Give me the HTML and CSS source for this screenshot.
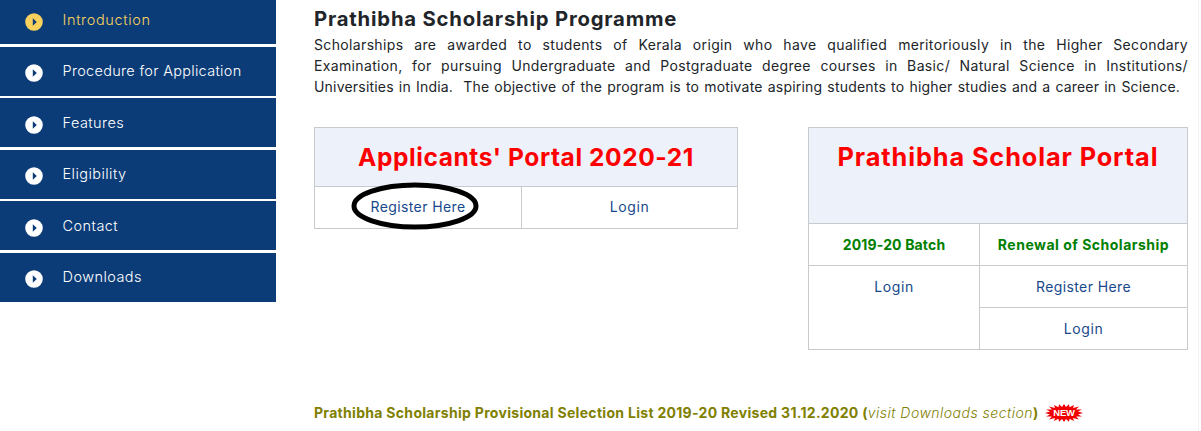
FILE: index.html
```html
<!DOCTYPE html>
<html lang="en">
<head>
    <meta charset="UTF-8">
    <meta name="viewport" content="width=device-width, initial-scale=1.0">
    <title>Prathibha Scholarship Programme</title>
    <link rel="stylesheet" href="styles.css">
</head>
<body>

    <svg class="defs" width="0" height="0">
        <symbol id="arrow" viewBox="0 0 18 18">
            <path fill="currentColor" fill-rule="evenodd" d="M9 0.2a8.8 8.8 0 1 0 0 17.6a8.8 8.8 0 0 0 0-17.6zM7.8 5.3L11.8 9l-4 3.7z"/>
        </symbol>
    </svg>

    <div class="page">
        <nav class="sidebar">
            <a class="active"><svg class="icon"><use href="#arrow"/></svg><span>Introduction</span></a>
            <a><svg class="icon"><use href="#arrow"/></svg><span class="procedure">Procedure for Application</span></a>
            <a><svg class="icon"><use href="#arrow"/></svg><span>Features</span></a>
            <a><svg class="icon"><use href="#arrow"/></svg><span>Eligibility</span></a>
            <a><svg class="icon"><use href="#arrow"/></svg><span>Contact</span></a>
            <a><svg class="icon"><use href="#arrow"/></svg><span>Downloads</span></a>
        </nav>

        <main class="content">
            <h1>Prathibha Scholarship Programme</h1>
            <p class="intro">
                <span>Scholarships are awarded to students of Kerala origin who have qualified meritoriously in the Higher Secondary</span>
                <span>Examination, for pursuing Undergraduate and Postgraduate degree courses in Basic/ Natural Science in Institutions/</span>
                <span class="last">Universities in India.&nbsp; The objective of the program is to motivate aspiring students to higher studies and a career in Science.</span>
            </p>

            <div class="portals">
                <table class="applicants">
                    <colgroup><col class="col-register"><col></colgroup>
                    <tr>
                        <th colspan="2"><h2>Applicants' Portal 2020-21</h2></th>
                    </tr>
                    <tr>
                        <td>
                            <a class="marked register">Register Here
                                <svg class="ring" width="128" height="48" viewBox="0 0 128 48"><ellipse cx="64" cy="24" rx="61" ry="21"/></svg>
                            </a>
                        </td>
                        <td><a class="login">Login</a></td>
                    </tr>
                </table>

                <table class="scholars">
                    <colgroup><col class="col-batch"><col></colgroup>
                    <tr>
                        <th colspan="2"><h2>Prathibha Scholar Portal</h2></th>
                    </tr>
                    <tr class="heads">
                        <td class="batch">2019-20 Batch</td>
                        <td class="renewal">Renewal of Scholarship</td>
                    </tr>
                    <tr>
                        <td rowspan="2"><a class="login">Login</a></td>
                        <td><a class="register">Register Here</a></td>
                    </tr>
                    <tr>
                        <td><a class="login">Login</a></td>
                    </tr>
                </table>
            </div>

            <p class="notice">
                <span><b>Prathibha Scholarship Provisional Selection List 2019-20 Revised 31.12.2020 (</b><i>visit Downloads section</i><b>)</b></span>
                <svg class="new" width="38" height="18" viewBox="0 0 38 18">
                    <polygon points="0,9 5,7.5 1,5.5 7,5.5 4,2.5 10,4 9,1 13.5,3.2 14,0.3 17,3 19,0 21,3 24,0.3 24.5,3.2 29,1 28,4 34,2.5 31,5.5 37,5.5 33,7.5 38,9 33,10.5 37,12.5 31,12.5 34,15.5 28,14 29,17 24.5,14.8 24,17.7 21,15 19,18 17,15 14,17.7 13.5,14.8 9,17 10,14 4,15.5 7,12.5 1,12.5 5,10.5"/>
                    <text x="19" y="12.3">NEW</text>
                </svg>
            </p>
        </main>
    </div>

</body>
</html>
```

FILE: styles.css
```css
* {
    box-sizing: border-box;
}
body {
    margin: 0;
    height: 431px;
    overflow: hidden;
    background: white;
    color: #212529;
    font-family: Inter, "Open Sans", sans-serif;
    font-size: 14px;
    line-height: 21px;
}
.defs {
    display: none;
}
.page {
    display: flex;
    width: 1199px;
    height: 431px;
    border-right: 1px solid #f3f3f3;
}
.sidebar {
    display: flex;
    flex-direction: column;
    gap: 2.5px;
    width: 276px;
    margin-top: -4.9px;
}
.sidebar a {
    display: flex;
    align-items: center;
    flex: none;
    height: 49px;
    padding-left: 25px;
    background: #0b3c78;
    color: white;
    font-size: 14.5px;
    font-weight: 300;
    letter-spacing: 0.45px;
}
.sidebar a.active {
    color: #f8d25c;
    letter-spacing: 0.65px;
}
.sidebar span {
    margin: 0 0 0.4px 19.5px;
}
.sidebar .procedure {
    letter-spacing: 0.3px;
}
.icon {
    width: 18px;
    height: 18px;
    margin-top: 4px;
}
.content {
    width: 874px;
    margin-left: 38px;
    padding-top: 8px;
}
h1 {
    margin: 0;
    font-size: 20.3px;
    line-height: 22px;
    font-weight: 700;
    letter-spacing: 0.8px;
    white-space: nowrap;
}
.intro {
    margin: 4px 0 30px;
}
.intro span {
    display: block;
    text-align-last: justify;
    white-space: nowrap;
    letter-spacing: 0.35px;
}
.intro .last {
    width: 866px;
    letter-spacing: 0.2px;
}
.portals {
    display: flex;
    justify-content: space-between;
    align-items: flex-start;
    height: 223px;
}
table {
    border-collapse: collapse;
    table-layout: fixed;
    text-align: center;
}
.applicants {
    width: 424px;
}
.scholars {
    width: 380px;
}
.col-register {
    width: 207px;
}
.col-batch {
    width: 171px;
}
th, td {
    height: 42px;
    padding: 9px 0 0;
    border: 1px solid #c8cacd;
    vertical-align: top;
}
.scholars td {
    padding-top: 10px;
}
th {
    height: 59px;
    padding-top: 14px;
    background: #edf1fa;
}
.scholars th {
    height: 96px;
}
h2 {
    margin: 0;
    color: #f00;
    font-size: 24.5px;
    line-height: 30px;
    font-weight: 700;
    letter-spacing: 0.58px;
    white-space: nowrap;
}
.scholars h2 {
    font-size: 25.3px;
    letter-spacing: 0.9px;
}
td a {
    color: #17498c;
}
.register {
    letter-spacing: 0.4px;
}
.login {
    letter-spacing: 0.6px;
}
.heads {
    color: green;
    font-weight: 700;
}
.batch {
    letter-spacing: 0.15px;
}
.renewal {
    letter-spacing: 0.5px;
}
.marked {
    position: relative;
}
.ring {
    position: absolute;
    left: -19px;
    top: -16px;
    fill: none;
    stroke: black;
    stroke-width: 5px;
}
.notice {
    display: flex;
    align-items: center;
    margin: 52px 0 0;
    color: #808000;
    white-space: nowrap;
    letter-spacing: 0.3px;
}
.notice i {
    font-weight: 300;
    letter-spacing: 0.48px;
}
.new {
    margin: 1px 0 0 7px;
    fill: #f00000;
}
.new text {
    fill: white;
    font-family: "Liberation Sans", sans-serif;
    font-size: 9.4px;
    font-weight: 700;
    letter-spacing: -0.2px;
    text-anchor: middle;
}
```
